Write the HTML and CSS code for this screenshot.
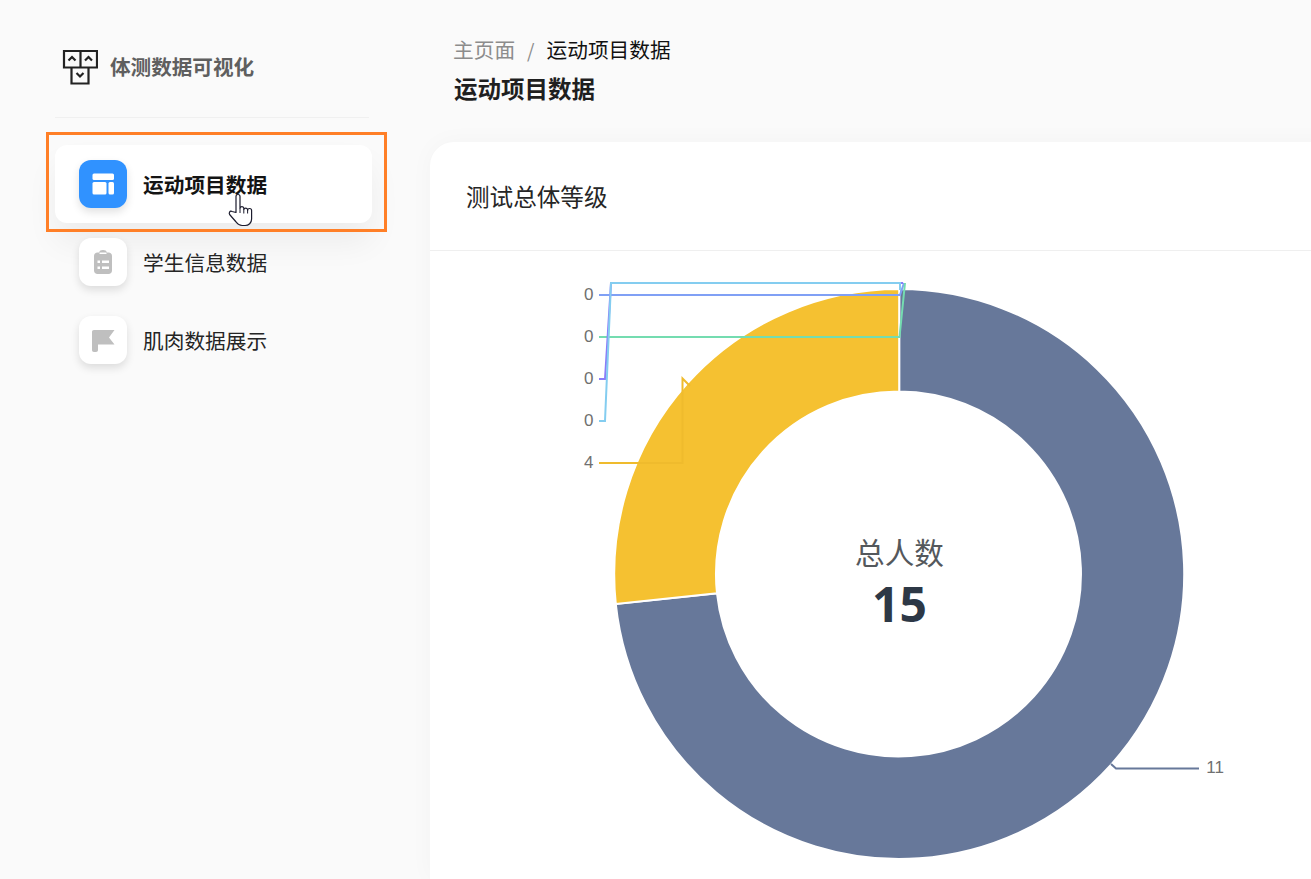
FILE: index.html
```html
<!DOCTYPE html>
<html lang="zh-CN">
<head>
    <meta charset="UTF-8" />
    <title>运动项目数据</title>
    <link rel="stylesheet" href="styles.css">
</head>
<body>
    <div class="app">
        <aside class="sidebar">
            <div class="brand">
                <svg class="brand-logo" viewBox="0 0 36 36" fill="none" stroke="#222" stroke-width="2.200">
                    <path d="M2 2h33v16.500H2z" />
                    <path d="M18.500 2v16.500M9.500 18.500V34.500h17V18.500" />
                    <path d="M6.500 11.500l3.500-3.500 3.500 3.500M23 11.500l3.500-3.500 3.500 3.500M14.500 24l3.500 3.500 3.500-3.500" />
                </svg>
                <span class="brand-name">体测数据可视化</span>
            </div>
            <div class="divider"></div>
            <nav class="menu">
                <a class="menu-item active">
                    <span class="menu-icon">
                        <svg viewBox="0 0 48 48" fill="#fff">
                            <rect x="13.500" y="13.500" width="21.500" height="6.500" rx="1.500" />
                            <rect x="13.500" y="22" width="14" height="12.500" rx="1.500" />
                            <rect x="29.500" y="22" width="5.500" height="12.500" rx="1.500" />
                        </svg>
                    </span>
                    <span>运动项目数据</span>
                </a>
                <a class="menu-item">
                    <span class="menu-icon">
                        <svg viewBox="0 0 48 48">
                            <path fill="#bfbfbf" d="M18.500 14.500h1.500c.5-1.700 1.800-2.500 4-2.500s3.500.8 4 2.500h1.500c2 0 3.500 1.500 3.500 3.500v14.500c0 2-1.500 3.500-3.500 3.500h-11c-2 0-3.500-1.500-3.500-3.500V18c0-2 1.500-3.500 3.500-3.500z" />
                            <path fill="#fff" d="M20.500 14.500h7v1.500h-7zM18.500 22.500h2.500v2.500h-2.500zM18.500 28.500h2.500v2.500h-2.500zM23 22.500h7v2.500h-7zM23 28.500h7v2.500h-7z" />
                        </svg>
                    </span>
                    <span>学生信息数据</span>
                </a>
                <a class="menu-item">
                    <span class="menu-icon">
                        <svg viewBox="0 0 48 48">
                            <path fill="#bfbfbf" d="M15 14H35.500l-5.500 7.500 5.500 7H19v5.500c0 1.300-.8 2-2 2h-2c-1.300 0-2-.7-2-2V16c0-1.300.7-2 2-2z" />
                        </svg>
                    </span>
                    <span>肌肉数据展示</span>
                </a>
            </nav>
        </aside>

        <main class="content">
            <div class="breadcrumb">
                <span class="crumb-muted">主页面</span>
                <span class="crumb-sep">/</span>
                <span class="crumb-current">运动项目数据</span>
            </div>
            <h1 class="page-title">运动项目数据</h1>

            <section class="card">
                <div class="card-header">测试总体等级</div>
                <svg class="chart" viewBox="430 251 900 628">
                    <path fill="#67789a" stroke="#fff" stroke-width="2" d="M899.200 289A285 285 0 1 1 615.800 604L717 593.300A182.500 182.500 0 1 0 899.200 391.500Z" />
                    <path fill="#f5c131" stroke="#fff" stroke-width="2" d="M899.200 289A285 285 0 0 0 615.800 604L717 593.300A182.500 182.500 0 0 1 899.200 391.500Z" />

                    <g fill="none" stroke-width="2">
                        <path stroke="#efbb2d" d="M599 463H682.500V378.500L690 386" />
                        <path stroke="#80a0f5" d="M599 295H900L904 283" />
                        <path stroke="#74dcb0" d="M599 337H899.500L905 283" />
                        <path stroke="#8a7cf8" d="M599 379H605L611 283H903" />
                        <path stroke="#84cdf0" d="M599 421H605L611 283H900V290" />
                        <path stroke="#67789a" d="M1111 764L1116 768.500H1199" />
                    </g>

                    <g class="chart-label">
                        <text x="593.500" y="299.500">0</text>
                        <text x="593.500" y="341.500">0</text>
                        <text x="593.500" y="383.500">0</text>
                        <text x="593.500" y="425.500">0</text>
                        <text x="593.500" y="467.500">4</text>
                        <text x="1224" y="773">11</text>
                    </g>

                    <text class="chart-title" x="899.500" y="564">总人数</text>
                    <text class="chart-total" x="899.500" y="622">15</text>
                </svg>
            </section>
        </main>

        <!-- 高亮框和鼠标 -->
        <div class="highlight"></div>
        <svg class="cursor" viewBox="226 192 28 36">
            <path fill="#fff" stroke="#1c1c2e" stroke-width="1.200" stroke-linejoin="round" d="M236 212.500V196.500a2 2 0 0 1 4 0V208a2 2 0 0 1 3.800 0v1.500a2 2 0 0 1 3.800 0v1a2 2 0 0 1 4 0V219c0 4-3 6.500-6.500 6.500h-3c-3 0-4.500-1.500-6-3.500l-6.500-7.500c-1-1.500.5-4.500 2.500-3l3.900 1Z" />
            <path fill="none" stroke="#1c1c2e" d="M240 208v5M243.800 209.500v4M247.600 210.500v3" />
        </svg>
    </div>
</body>
</html>
```

FILE: styles.css
```css
/* Estrutura geral */
body {
    margin: 0;
    background-color: #fafafa;
    font-family: "Noto Sans CJK SC", "Noto Sans", sans-serif;
    color: #252525;
}

.app {
    position: relative;
    display: flex;
    height: 879px;
    overflow: hidden;
}

/* Barra lateral */
.sidebar {
    flex: none;
    width: 430px;
}

.brand {
    display: flex;
    align-items: center;
    gap: 12px;
    height: 36px;
    margin: 49px 0 0 62px;
}

.brand-logo {
    flex: none;
    width: 36px;
    height: 36px;
}

.brand-name {
    padding-bottom: 2px;
    font-size: 20.6px;
    font-weight: 700;
    color: #5f5f5f;
}

.divider {
    width: 314px;
    height: 1px;
    margin: 32px 0 0 55px;
    background-color: #f0f0f0;
}

.menu {
    display: flex;
    flex-direction: column;
    width: 317px;
    margin: 27px 0 0 55px;
}

.menu-item {
    display: flex;
    align-items: center;
    gap: 16px;
    height: 78px;
    padding-left: 24px;
    border-radius: 12px;
    font-size: 20.7px;
}

.menu-item.active {
    background-color: #fff;
    box-shadow: 0 20px 32px rgba(0, 0, 0, 0.055);
    font-weight: 700;
    color: #141414;
}

.menu-icon {
    flex: none;
    width: 48px;
    height: 48px;
    border-radius: 12px;
    background-color: #fff;
    box-shadow: 0 4px 8px rgba(0, 0, 0, 0.12);
}

.menu-item.active .menu-icon {
    background-color: #3092ff;
}

.menu-icon svg {
    display: block;
    width: 48px;
    height: 48px;
}

/* Conteúdo */
.content {
    flex: 1;
    min-width: 0;
}

.breadcrumb {
    display: flex;
    align-items: center;
    gap: 12px;
    height: 30px;
    margin: 34px 0 0 23px;
    font-size: 20.7px;
}

.crumb-muted {
    color: #8c8c8c;
}

.crumb-sep {
    color: #8c8c8c;
    font-size: 19px;
}

.crumb-current {
    color: #111;
}

.page-title {
    height: 30px;
    margin: 9px 0 0 24px;
    font-size: 23.5px;
    font-weight: 700;
    line-height: 30px;
    color: #1f1f1f;
}

.card {
    width: 900px;
    margin-top: 39px;
    background-color: #fff;
    border-radius: 24px 0 0 0;
    box-shadow: 0 0 24px rgba(0, 0, 0, 0.03);
}

.card-header {
    display: flex;
    align-items: center;
    height: 108px;
    padding-left: 36px;
    border-bottom: 1px solid #efefef;
    font-size: 23.6px;
    color: #262626;
}

/* Gráfico */
.chart {
    display: block;
    width: 900px;
    height: 628px;
}

.chart-label text {
    font-family: "Liberation Sans", sans-serif;
    font-size: 17px;
    fill: #707070;
    text-anchor: end;
}

.chart-title {
    font-size: 29.6px;
    fill: #54585c;
    text-anchor: middle;
}

.chart-total {
    font-family: "Open Sans", sans-serif;
    font-size: 48px;
    font-weight: 700;
    fill: #2d3846;
    text-anchor: middle;
}

/* Destaque sobre o menu */
.highlight {
    position: absolute;
    left: 46px;
    top: 132px;
    width: 335px;
    height: 94px;
    border: 3px solid #ff7f27;
}

.cursor {
    position: absolute;
    left: 226px;
    top: 192px;
    width: 28px;
    height: 36px;
}
```
